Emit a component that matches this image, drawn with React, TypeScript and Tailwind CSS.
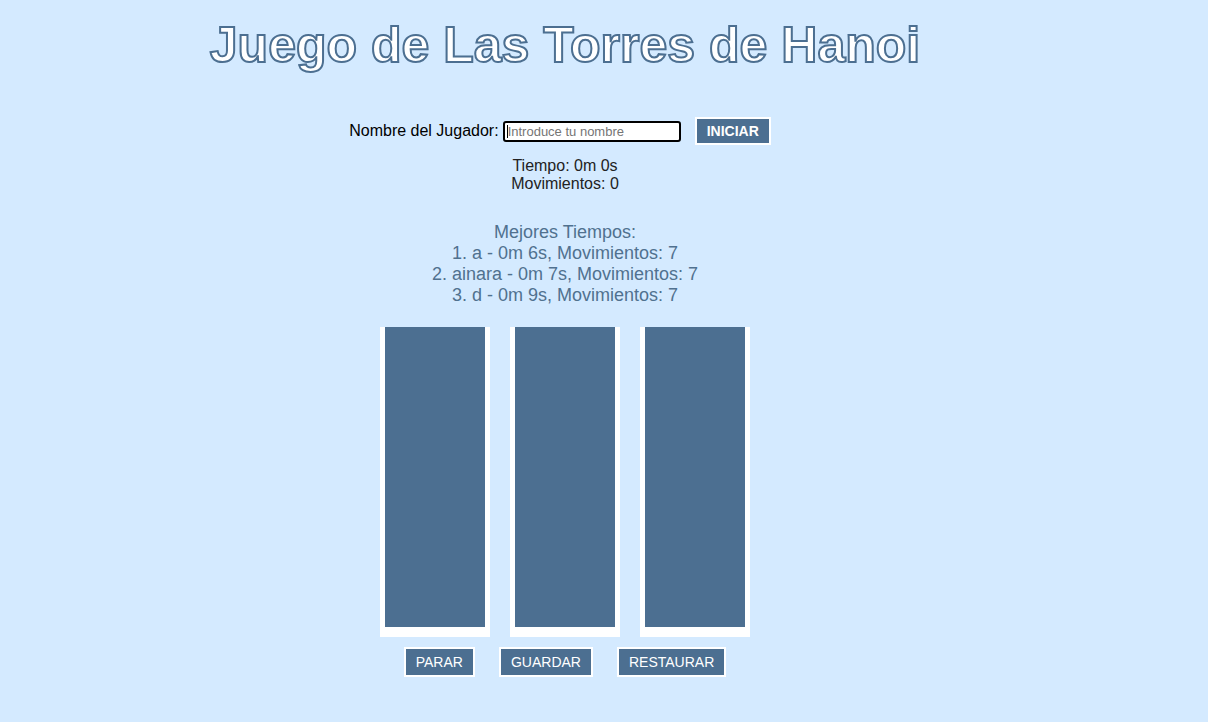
import React from "react";

const blue = "bg-[#4c6f91]";

function Btn({ label, bold, h }: { label: string; bold?: boolean; h: string }) {
  return (
    <button
      className={`${blue} ${h} border-2 border-white px-[10px] text-[14px] leading-[16px] text-white ${bold ? "font-bold" : "font-normal"}`}
    >
      {label}
    </button>
  );
}

function Tower() {
  return (
    <div className="bg-white px-[5px] pb-[10px]">
      <div className="h-[300px] w-[100px] bg-[#4c6f91]" />
    </div>
  );
}

export default function App() {
  return (
    <div className="min-h-[722px] w-full bg-[#d4eaff] font-['Liberation_Sans',Arial,sans-serif]">
      <div className="flex w-[1130px] flex-col items-center pt-[16px]">
        <h1 className="text-[50px] font-bold leading-[58px] text-white [-webkit-text-stroke:2px_#4c6f91]">
          Juego de Las Torres de Hanoi
        </h1>

        <div className="mt-[43px] flex h-[28px] items-center pr-[10px]">
          <span className="text-[16px] leading-[18px] text-black">Nombre del Jugador:</span>
          <div className="relative ml-[4px]">
            <input
              className="box-border block h-[21px] w-[178px] rounded-[3px] border-2 border-black bg-white px-[3px] py-0 text-[13px] leading-[17px] text-black outline-none placeholder:text-[#757575]"
              placeholder="Introduce tu nombre"
              style={{ caretColor: "transparent" }}
            />
            <span className="pointer-events-none absolute left-[4px] top-[4px] h-[13px] w-[1px] bg-black" />
          </div>
          <div className="ml-[14px]">
            <Btn label="INICIAR" bold h="h-[28px]" />
          </div>
        </div>

        <div className="mt-[12px] text-center text-[16px] leading-[18px] text-[#222222]">
          <div>Tiempo: 0m 0s</div>
          <div>Movimientos: 0</div>
        </div>

        <div className="mt-[29px] text-center text-[18px] leading-[21px] text-[#50718f]">
          <div>Mejores Tiempos:</div>
          <div>1. a - 0m 6s, Movimientos: 7</div>
          <div>2. ainara - 0m 7s, Movimientos: 7</div>
          <div>3. d - 0m 9s, Movimientos: 7</div>
        </div>

        <div className="mt-[21px] flex gap-[20px]">
          <Tower />
          <Tower />
          <Tower />
        </div>

        <div className="mt-[10px] flex gap-[24px]">
          <Btn label="PARAR" h="h-[30px]" />
          <Btn label="GUARDAR" h="h-[30px]" />
          <Btn label="RESTAURAR" h="h-[30px]" />
        </div>
      </div>
    </div>
  );
}
